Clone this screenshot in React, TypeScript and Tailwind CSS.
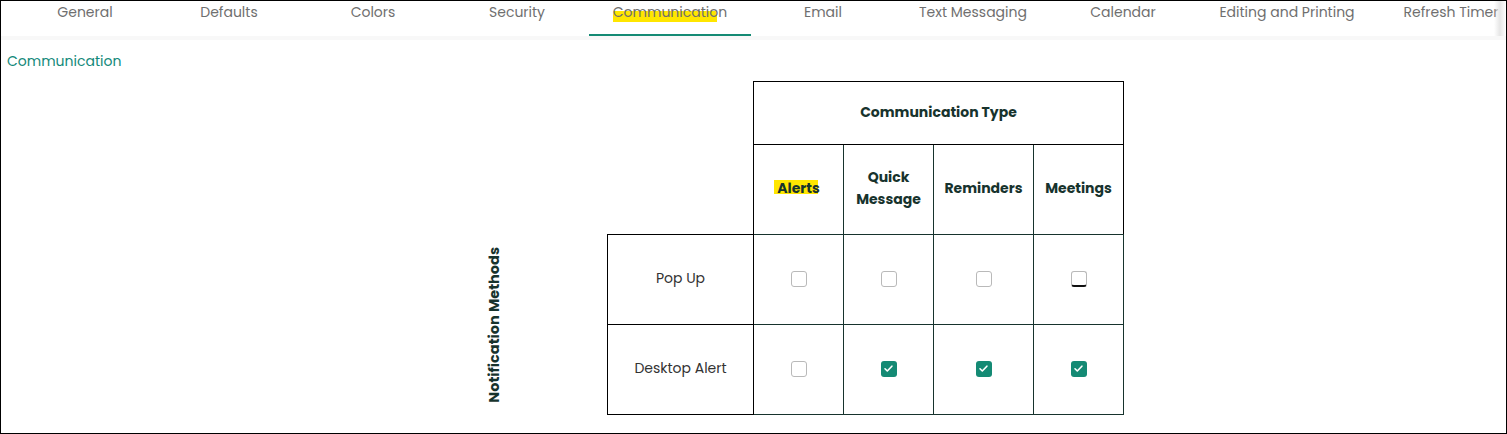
import React from 'react';

const tabs = [
    { label: 'General', w: 'w-[144px]' },
    { label: 'Defaults', w: 'w-[144px]' },
    { label: 'Colors', w: 'w-[144px]' },
    { label: 'Security', w: 'w-[144px]' },
    { label: 'Communication', w: 'w-[162px]', active: true },
    { label: 'Email', w: 'w-[144px]' },
    { label: 'Text Messaging', w: 'w-[156px]' },
    { label: 'Calendar', w: 'w-[144px]' },
    { label: 'Editing and Printing', w: 'w-[184px]' },
    { label: 'Refresh Timer', w: 'w-[144px]' },
];

const types = [
    { label: 'Alerts', w: 'w-[90px]' },
    { label: 'Quick Message', w: 'w-[90px]' },
    { label: 'Reminders', w: 'w-[100px]' },
    { label: 'Meetings', w: 'w-[90px]' },
];

const rows = [
    { label: 'Pop Up', values: [false, false, false, false] },
    { label: 'Desktop Alert', values: [false, true, true, true] },
];

function Checkbox({ checked, focused }: { checked: boolean; focused?: boolean }) {
    if (checked) {
        return (
            <span className="inline-flex h-[16px] w-[16px] items-center justify-center rounded-[3px] bg-[#148a74]">
                <svg width="11" height="11" viewBox="0 0 12 12" fill="none">
                    <path d="M2.2 6.3l2.5 2.4 5-5.2" stroke="#fff" strokeWidth="1.8" strokeLinecap="round" strokeLinejoin="round" />
                </svg>
            </span>
        );
    }
    return (
        <span
            className={
                focused
                    ? 'inline-block h-[16px] w-[16px] rounded-[3px] border border-[#b9b9b9] border-b-[#111] border-b-2 bg-white'
                    : 'inline-block h-[16px] w-[16px] rounded-[3px] border border-[#b9b9b9] bg-white'
            }
        />
    );
}

export default function App() {
    return (
        <div className="h-[434px] w-full overflow-hidden border border-black bg-white font-['Poppins','Inter',sans-serif]">
            {/* Tabs */}
            <div className="relative flex h-[35px] pl-[12px] border-b-[4px] border-[#f8f8f8] box-content">
                {tabs.map(t => (
                    <div
                        key={t.label}
                        className={
                            t.active
                                ? `${t.w} shrink-0 h-[35px] border-b-2 border-[#148a74] pt-[1px] text-center text-[14px] text-[#6f6f6f] whitespace-nowrap`
                                : `${t.w} shrink-0 h-[35px] pt-[1px] text-center text-[14px] text-[#6f6f6f] whitespace-nowrap`
                        }
                    >
                        {t.active ? (
                            <span className="relative">
                                <span className="absolute left-0 top-[9px] h-[11px] w-[91%] bg-[#ffe600]" />
                                <span className="relative">{t.label}</span>
                            </span>
                        ) : (
                            t.label
                        )}
                    </div>
                ))}
                <div className="absolute right-0 top-0 h-[35px] w-[12px] bg-gradient-to-r from-transparent via-[#e6e6e6] to-white" />
            </div>

            {/* Section title */}
            <div className="px-[6px] pt-[12px] text-[14px] leading-[18px] text-[#13897a]">Communication</div>

            {/* Matrix */}
            <div className="mt-[11px] flex items-end">
                <div className="ml-[469px] mr-[87px] flex h-[180px] w-[50px] items-center justify-center">
                    <span className="-rotate-90 whitespace-nowrap text-[14.5px] font-bold text-[#17332d]">
                        Notification Methods
                    </span>
                </div>
                <table className="border-collapse text-[14px]">
                    <thead>
                        <tr className="h-[63px]">
                            <th className="w-[146px] p-0" />
                            <th colSpan={4} className="border border-black p-0 pb-[2px] text-center font-bold text-[#17332d]">
                                Communication Type
                            </th>
                        </tr>
                        <tr className="h-[90px]">
                            <th className="w-[146px] border-r border-black p-0" />
                            {types.map((c, i) => (
                                <th
                                    key={c.label}
                                    className={`${c.w} border border-[#17332d] ${i === 3 ? 'border-r-black' : ''} px-[6px] pb-[4px] text-center font-bold leading-[22px] text-[#17332d]`}
                                >
                                    {i === 0 ? (
                                        <span className="relative">
                                            <span className="absolute -left-[3px] top-[2px] h-[14px] w-[44px] bg-[#ffe600]" />
                                            <span className="relative">{c.label}</span>
                                        </span>
                                    ) : (
                                        c.label
                                    )}
                                </th>
                            ))}
                        </tr>
                    </thead>
                    <tbody>
                        {rows.map((r, ri) => (
                            <tr key={r.label} className="h-[90px]">
                                <td className="w-[146px] border border-black pb-[2px] text-center text-[#333]">{r.label}</td>
                                {r.values.map((v, i) => (
                                    <td key={i} className="border border-[#17332d] text-center align-middle">
                                        <div className="flex justify-center pb-[2px]">
                                            <Checkbox checked={v} focused={ri === 0 && i === 3} />
                                        </div>
                                    </td>
                                ))}
                            </tr>
                        ))}
                    </tbody>
                </table>
            </div>
        </div>
    );
}
